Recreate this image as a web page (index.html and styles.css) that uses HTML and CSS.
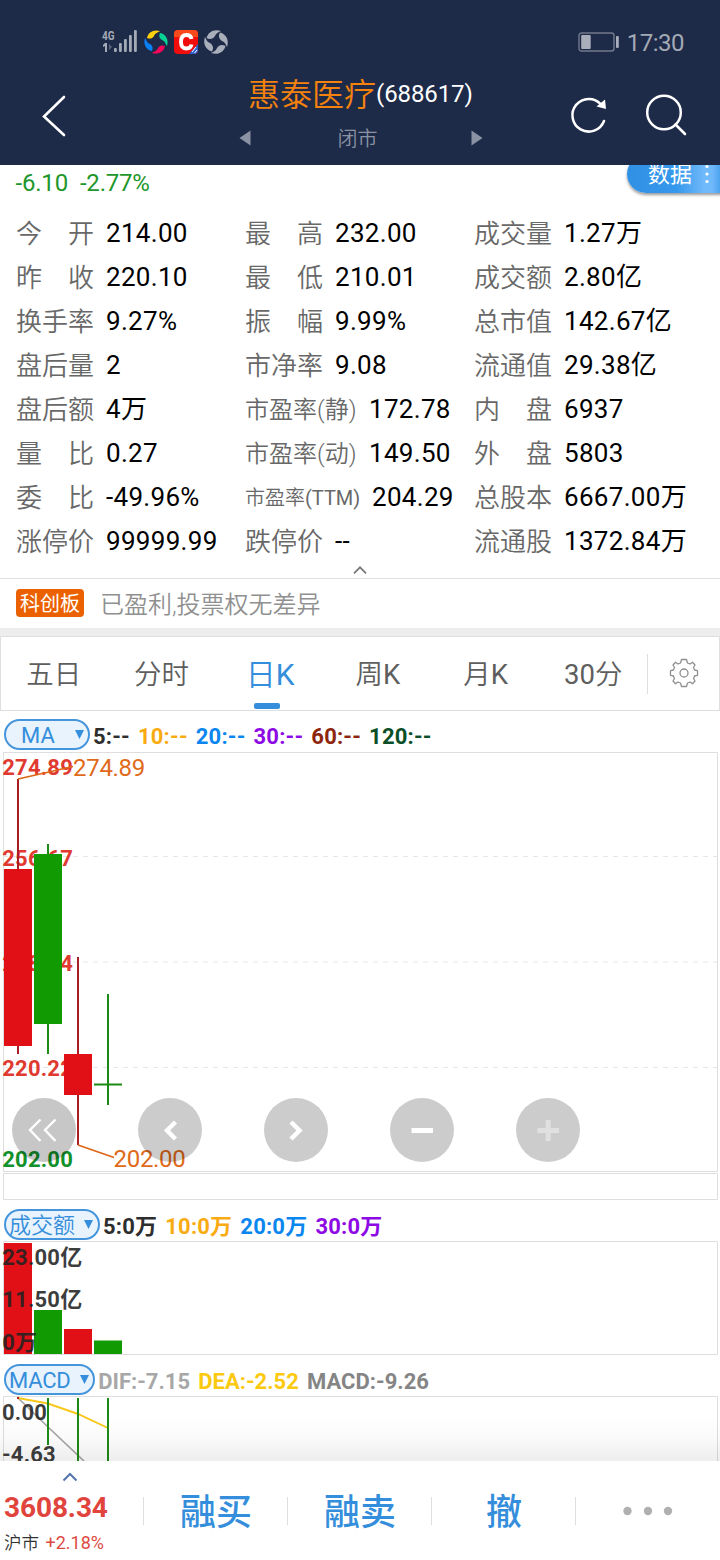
FILE: index.html
```html
<!DOCTYPE html>
<html lang="zh-CN">
<head>
<meta charset="utf-8">
<title>惠泰医疗(688617)</title>
<link rel="stylesheet" href="styles.css">
</head>
<body>
<div class="app">
  <header class="header">
    <div class="status">
      <svg class="status-icons" width="130" height="28" viewBox="0 0 130 28">
        <g fill="#a4aab6">
          <text class="net" x="1" y="12" textLength="12.500" lengthAdjust="spacingAndGlyphs">4G</text>
          <path d="M4 15h2v9H4v-6l-2 1v-2z"/>
          <path d="M8 16l3 3-3 3z" opacity=".45"/>
          <rect x="13" y="20" width="2.800" height="4" rx="1"/>
          <rect x="18" y="15" width="2.800" height="9" rx="1"/>
          <rect x="23" y="11" width="2.800" height="13" rx="1"/>
          <rect x="28" y="7" width="2.800" height="17" rx="1"/>
          <rect x="33" y="2" width="2.800" height="22" rx="1"/>
        </g>
        <g transform="translate(55 14)">
          <path d="M-9-4C-8-10-2-13 4-11C1-9-1-9-2-6C-4-3-6-3-9-4z" fill="#fbd00c"/>
          <path d="M-9-4C-8-10-2-13 4-11C1-9-1-9-2-6C-4-3-6-3-9-4z" fill="#07d293" transform="rotate(90)"/>
          <path d="M-9-4C-8-10-2-13 4-11C1-9-1-9-2-6C-4-3-6-3-9-4z" fill="#f6065b" transform="rotate(180)"/>
          <path d="M-9-4C-8-10-2-13 4-11C1-9-1-9-2-6C-4-3-6-3-9-4z" fill="#0b7ff5" transform="rotate(270)"/>
        </g>
        <rect x="73" y="2" width="24" height="24" rx="4" fill="#f20d0d"/>
        <path d="M73 9V6a4 4 0 0 1 4-4h16a4 4 0 0 1 4 4v3z" fill="#fa4a1c"/>
        <path d="M97 16v6a4 4 0 0 1-4 4h-5z" fill="#2e62cf"/>
        <path d="M91 24l4-5M93.500 25l2.500-3" stroke="#fff" stroke-width="1"/>
        <path d="M90.500 11C90 7.500 87.500 7 85.500 7C82 7 80 9 80 13.700S82 20.500 85.500 20.500C88 20.500 90 19.500 90.500 16.500" fill="none" stroke="#fff" stroke-width="3.800"/>
        <g transform="translate(115 14)" fill="#a9aebb">
          <path id="grey" d="M-9.500-4C-8-10-2-13.500 5-11C2-9.500 0-9-1-6C-3-3-6-2-9.500-4z"/>
          <use href="#grey" transform="rotate(90)"/><use href="#grey" transform="rotate(180)"/><use href="#grey" transform="rotate(270)"/>
        </g>
      </svg>
      <div class="clock">
        <svg width="42" height="20" viewBox="0 0 42 20"><rect x="1" y="1" width="35" height="18" rx="2.500" fill="none" stroke="#717a8b" stroke-width="1.400"/><rect x="3.200" y="3" width="9.500" height="14" rx="1" fill="#a9aebb"/><rect x="38" y="4" width="2.800" height="12" rx="1" fill="#a9aebb"/></svg>
        <span>17:30</span>
      </div>
    </div>
    <div class="nav">
      <svg width="26" height="44" viewBox="0 0 26 44"><path d="M22 3L2 22.500L22 41" fill="none" stroke="#fff" stroke-width="2.600" stroke-linecap="round"/></svg>
      <div class="heading">
        <div class="name">惠泰医疗<span class="code">(688617)</span></div>
        <div class="session">
          <svg width="12" height="16" viewBox="0 0 12 16"><path d="M11.500 .5v15L.5 8z" fill="#8a92a3"/></svg>
          <span>闭市</span>
          <svg width="12" height="16" viewBox="0 0 12 16"><path d="M.5 .5v15L11.500 8z" fill="#8a92a3"/></svg>
        </div>
      </div>
      <div class="actions">
        <svg width="40" height="44" viewBox="0 0 40 44"><path d="M31 12.500A16.300 16.300 0 1 0 34 29" fill="none" stroke="#fff" stroke-width="2.500" stroke-linecap="round"/><path d="M35 7.500L36 17L26.500 14.500z" fill="#fff"/></svg>
        <svg width="44" height="44" viewBox="0 0 44 44"><circle cx="20" cy="20.500" r="16.800" fill="none" stroke="#fff" stroke-width="2.500"/><path d="M31.500 32.500L41 42" stroke="#fff" stroke-width="2.600" stroke-linecap="round"/></svg>
      </div>
    </div>
  </header>

  <section class="quote">
    <div class="change"><span>-6.10</span><span>-2.77%</span></div>
    <div class="data-tag">数据<svg width="4" height="20" viewBox="0 0 4 20" fill="#fff"><circle cx="2" cy="2.500" r="1.600"/><circle cx="2" cy="10" r="1.600"/><circle cx="2" cy="17.500" r="1.600"/></svg></div>
    <div class="stats">
      <div class="stat"><span class="label"><i>今</i><i>开</i></span><b>214.00</b></div>
      <div class="stat"><span class="label"><i>最</i><i>高</i></span><b>232.00</b></div>
      <div class="stat"><span class="label">成交量</span><b>1.27万</b></div>
      <div class="stat"><span class="label"><i>昨</i><i>收</i></span><b>220.10</b></div>
      <div class="stat"><span class="label"><i>最</i><i>低</i></span><b>210.01</b></div>
      <div class="stat"><span class="label">成交额</span><b>2.80亿</b></div>
      <div class="stat"><span class="label">换手率</span><b>9.27%</b></div>
      <div class="stat"><span class="label"><i>振</i><i>幅</i></span><b>9.99%</b></div>
      <div class="stat"><span class="label">总市值</span><b>142.67亿</b></div>
      <div class="stat"><span class="label">盘后量</span><b>2</b></div>
      <div class="stat"><span class="label">市净率</span><b>9.08</b></div>
      <div class="stat"><span class="label">流通值</span><b>29.38亿</b></div>
      <div class="stat"><span class="label">盘后额</span><b>4万</b></div>
      <div class="stat"><span class="label mid">市盈率(静)</span><b>172.78</b></div>
      <div class="stat"><span class="label"><i>内</i><i>盘</i></span><b>6937</b></div>
      <div class="stat"><span class="label"><i>量</i><i>比</i></span><b>0.27</b></div>
      <div class="stat"><span class="label mid">市盈率(动)</span><b>149.50</b></div>
      <div class="stat"><span class="label"><i>外</i><i>盘</i></span><b>5803</b></div>
      <div class="stat"><span class="label"><i>委</i><i>比</i></span><b>-49.96%</b></div>
      <div class="stat"><span class="label small">市盈率<span class="latin">(TTM)</span></span><b>204.29</b></div>
      <div class="stat"><span class="label">总股本</span><b>6667.00万</b></div>
      <div class="stat"><span class="label">涨停价</span><b>99999.99</b></div>
      <div class="stat"><span class="label">跌停价</span><b>--</b></div>
      <div class="stat"><span class="label">流通股</span><b>1372.84万</b></div>
    </div>
    <div class="collapse"><svg width="14" height="10" viewBox="0 0 14 10"><path d="M1 8.300L7 2.300L13 8.300" fill="none" stroke="#777" stroke-width="1.700"/></svg></div>
  </section>

  <section class="board"><span class="badge">科创板</span><span>已盈利,投票权无差异</span></section>

  <nav class="tabs">
    <span class="tab">五日</span><span class="tab">分时</span><span class="tab active">日<span class="latin">K</span></span><span class="tab">周<span class="latin">K</span></span><span class="tab">月<span class="latin">K</span></span><span class="tab"><span class="latin">30</span>分</span>
    <span class="settings"><svg width="30" height="30" viewBox="-15 -15 30 30" fill="none" stroke="#909090" stroke-width="1.300" stroke-linejoin="round"><path d="M-2.500-13.500H2.500L3.500-10Q5-9.500 6-9L8.500-10.800L11-8L9.500-5.500Q10.200-4.500 10.500-3L13.500-2.300V2.300L10.500 3Q10.200 4.500 9.500 5.500L11 8L8.500 10.800L6 9Q5 9.500 3.500 10L2.500 13.500H-2.500L-3.500 10Q-5 9.500-6 9L-8.500 10.800L-11 8L-9.500 5.500Q-10.200 4.500-10.500 3L-13.500 2.300V-2.300L-10.500-3Q-10.200-4.500-9.500-5.500L-11-8L-8.500-10.800L-6-9Q-5-9.500-3.500-10Z"/><circle r="4"/></svg></span>
  </nav>

  <div class="legend ma">
    <span class="pill"><span class="latin">MA</span><svg width="9" height="9" viewBox="0 0 8 9" preserveAspectRatio="none"><path d="M0 0h8L4 9z" fill="#348edb"/></svg></span>
    <span class="c-dark">5:--</span><span class="c-amber">10:--</span><span class="c-blue">20:--</span><span class="c-violet">30:--</span><span class="c-brown">60:--</span><span class="c-green">120:--</span>
  </div>

  <div class="price">
    <svg width="720" height="448" viewBox="0 752 720 448">
      <path d="M3.500 752.500H717.500V1171.500H3.500ZM3.500 1173.500H717.500V1199.500H3.500Z" class="frame"/>
      <path d="M3 856.500H717M3 962H717M3 1067.500H717" class="grid"/>
      <g class="axis up">
        <text x="2.300" y="775">274.89</text><text x="2.300" y="866">256.67</text><text x="2.300" y="971">238.44</text><text x="2.300" y="1076">220.22</text>
      </g>
      <text class="axis down" x="2.300" y="1167">202.00</text>
      <path d="M18 779V1054M78 957V1145" stroke="#ab1d25" stroke-width="2"/>
      <path d="M48 844V1054M108 994V1105M94 1084.500H122" stroke="#1d8a16" stroke-width="2"/>
      <path d="M4 869h28v177H4zM64 1054h28v41H64z" fill="#e11017"/>
      <path d="M34 854h28v170H34z" fill="#129a02"/>
      <path d="M18 779L73 766.500M78 1145L114 1157.500" stroke="#dc6616" stroke-width="1.700"/>
      <text class="mark" x="73" y="776">274.89</text><text class="mark" x="113.500" y="1167">202.00</text>
    </svg>
    <div class="controls">
      <span class="control first"><svg width="64" height="64" viewBox="0 0 64 64"><path d="M28.500 21.500L18 32L28.500 43M43.500 21.500L33 32L43.500 43"/></svg></span>
      <span class="control"><svg width="64" height="64" viewBox="0 0 64 64"><path class="thick" d="M37.500 24L29 32.500L37.500 41"/></svg></span>
      <span class="control"><svg width="64" height="64" viewBox="0 0 64 64"><path class="thick" d="M27 24L35.500 32.500L27 41"/></svg></span>
      <span class="control"><svg width="64" height="64" viewBox="0 0 64 64"><path class="bar" d="M21.500 32.500H43"/></svg></span>
      <span class="control off"><svg width="64" height="64" viewBox="0 0 64 64"><path class="bar" d="M21.500 32.500H43M32.200 22V43"/></svg></span>
    </div>
  </div>

  <div class="legend vol">
    <span class="pill">成交额<svg width="9" height="9" viewBox="0 0 8 9" preserveAspectRatio="none"><path d="M0 0h8L4 9z" fill="#348edb"/></svg></span>
    <span class="c-dark">5:0万</span><span class="c-amber">10:0万</span><span class="c-blue">20:0万</span><span class="c-violet">30:0万</span>
  </div>
  <svg class="plot" width="720" height="114" viewBox="0 1241 720 114">
    <path d="M3.500 1241.500H717.500V1354.500H3.500Z" class="frame"/>
    <path d="M4 1243h28v111H4zM64 1329h28v25H64z" fill="#e11017"/>
    <path d="M34 1310h28v44H34zM94 1340.500h28v13.500H94z" fill="#129a02"/>
    <g class="axis ink"><text x="2.300" y="1265">23.00亿</text><text x="2.300" y="1307">11.50亿</text><text x="2.300" y="1350">0万</text></g>
  </svg>

  <div class="legend macd">
    <span class="pill"><span class="latin">MACD</span><svg width="9" height="9" viewBox="0 0 8 9" preserveAspectRatio="none"><path d="M0 0h8L4 9z" fill="#348edb"/></svg></span>
    <span class="c-silver">DIF:-7.15</span><span class="c-yellow">DEA:-2.52</span><span class="c-grey">MACD:-9.26</span>
  </div>
  <div class="macd-plot">
    <svg class="plot" width="720" height="65" viewBox="0 1396 720 65">
      <path d="M3.500 1470V1396.500H717.500V1470" class="frame"/>
      <path d="M18 1398L48 1427L84 1461" fill="none" stroke="#a5a5a5" stroke-width="1.700"/>
      <path d="M18 1398L48 1403.500L78 1414L108 1428" fill="none" stroke="#f8c81c" stroke-width="1.900"/>
      <path d="M48 1398V1445M78 1398V1461M108 1398V1461" stroke="#1d8a16" stroke-width="2"/>
      <rect x="17" y="1397" width="2" height="2" fill="#ab1d25"/>
      <g class="axis ink"><text x="2" y="1420">0.00</text><text x="2" y="1462">-4.63</text></g>
    </svg>
  </div>

  <footer class="footer">
    <div class="index">
      <svg width="16" height="10" viewBox="0 0 16 10"><path d="M1.500 8.500L8 2L14.500 8.500" fill="none" stroke="#5474ac" stroke-width="2"/></svg>
      <strong>3608.34</strong>
      <div class="market">沪市<em>+2.18%</em></div>
    </div>
    <div class="trade">融买</div>
    <div class="trade">融卖</div>
    <div class="trade">撤</div>
    <div class="trade more"><svg width="50" height="10" viewBox="0 0 50 10" fill="#b0b0b0"><circle cx="4.500" cy="5" r="4.200"/><circle cx="25" cy="5" r="4.200"/><circle cx="45" cy="5" r="4.200"/></svg></div>
  </footer>
</div>
</body>
</html>
```

FILE: styles.css
```css
* { box-sizing: border-box; margin: 0; padding: 0; }
body { width: 720px; height: 1560px; overflow: hidden; background: #fff; font-family: Roboto, "Noto Sans CJK SC", sans-serif; }
svg { display: block; flex: none; }
i, em { font-style: normal; }
span { white-space: nowrap; }
.latin { font-weight: 400; }
.app { width: 720px; height: 1560px; display: flex; flex-direction: column; }

.header { position: relative; z-index: 2; flex: none; height: 165px; background: #1e2b48; color: #fff; }
.status { height: 72px; padding: 28px 36px 0 101px; display: flex; justify-content: space-between; align-items: flex-start; }
.net { font: 700 13px Roboto, sans-serif; }
.clock { display: flex; align-items: center; gap: 7px; color: #a3a9b5; font-size: 24px; line-height: 30px; letter-spacing: -.5px; }
.clock svg { margin-top: -2px; }
.nav { height: 93px; padding: 0 32px 0 42px; display: grid; grid-template-columns: 26px 1fr 118px; align-items: start; }
.nav > svg { margin-top: 22px; }
.heading { padding-left: 171px; }
.name { width: 240px; margin-left: 9px; font-size: 32px; line-height: 46px; color: #f6820e; white-space: nowrap; font-weight: 350; }
.code { color: #fff; font-size: 24px; position: relative; top: -4px; font-weight: 400; letter-spacing: -.1px; }
.session { width: 244px; height: 44px; margin: -5px 0 0 -.5px; display: flex; align-items: center; justify-content: space-between; color: #8a92a3; font-size: 20px; font-weight: 350; }
.session span { margin: -2px 6px 0 0; }
.actions { display: flex; justify-content: space-between; padding-top: 20px; }

.quote { position: relative; flex: none; height: 414px; border-bottom: 1px solid #dfdfdf; }
.change { height: 47px; padding: 4px 0 0 15.500px; display: flex; gap: 12px; color: #1e962b; font-size: 24px; line-height: 28px; letter-spacing: -.2px; }
.data-tag { position: absolute; right: -6px; top: -10px; width: 99px; height: 38px; padding: 2px 0 0 21px; border-radius: 19px 0 0 19px; background: linear-gradient(90deg, #3090e4, #3698ec 50%, #70b9fb 78%, #70b9fb 86%, #3194e7); color: #fff; font-size: 22px; line-height: 36px; display: flex; align-items: center; gap: 12.500px; box-shadow: 0 2px 3px rgba(0, 0, 0, .4); }
.data-tag svg { margin-top: -2px; }
.stats { padding-left: 16px; display: grid; grid-template-columns: 229px 229px 246px; grid-auto-rows: 44px; }
.stat { height: 44px; display: flex; align-items: flex-start; line-height: 44px; }
.stat b { margin: -1px 0 0 12px; font-size: 26px; font-weight: 400; letter-spacing: .3px; color: #000; white-space: nowrap; }
.label { width: 78px; display: flex; justify-content: space-between; font-size: 26px; font-weight: 350; color: #686868; }
.label.mid { width: 112px; font-size: 24px; }
.label.small { width: 115px; font-size: 20px; }
.collapse { height: 14px; display: flex; justify-content: center; padding-top: 1px; }

.board { flex: none; height: 57px; border-bottom: 8px solid #ededed; padding: 0 16px 2px; display: flex; align-items: center; gap: 16px; color: #909090; font-size: 24px; font-weight: 350; }
.badge { width: 68px; height: 28px; margin-top: 1px; border-radius: 4px; background: #eb6100; color: #fff; font-size: 20px; line-height: 30px; font-weight: 400; text-align: center; }

.tabs { flex: none; height: 75px; border: 1px solid #dedede; display: flex; align-items: center; }
.tab { position: relative; flex: none; width: 107.700px; height: 73px; line-height: 76px; text-align: center; font-size: 27.500px; font-weight: 350; color: #5e5e5e; text-indent: -2px; }
.tab:nth-child(n+4) { text-indent: 0; }
.tab.active { font-size: 30px; color: #348edb; text-indent: 0; }
.tab.active::after { content: ""; position: absolute; left: 37.600px; bottom: 1px; width: 26px; height: 6px; border-radius: 2px; background: #348edb; }
.settings { flex: 1; height: 40px; border-left: 1px solid #dedede; display: flex; align-items: center; justify-content: center; }
.settings svg { margin: -2px 0 0 1px; }

.legend { flex: none; display: flex; align-items: flex-start; gap: 8px; padding-left: 4px; font-size: 22px; font-weight: 700; line-height: 30px; white-space: nowrap; letter-spacing: .2px; }
.legend > span { margin-top: 3px; }
.legend > .pill { height: 31px; margin: 0 -5px 0 0; padding-top: 2px; border: 2px solid #4595dc; border-radius: 16px; background: #e8f3fd; color: #348edb; font-weight: 350; letter-spacing: 0; display: flex; align-items: center; }
.pill svg { margin-top: -3px; }
.legend.ma { height: 41px; padding-top: 8px; }
.ma .pill { width: 86px; padding-left: 15px; gap: 20px; }
.legend.vol { height: 41px; padding-top: 9px; }
.vol .pill { width: 96px; padding-left: 3px; gap: 9px; }
.legend.macd { height: 41px; padding-top: 9px; letter-spacing: 0; gap: 8.200px; }
.macd .pill { width: 91px; padding-left: 3px; gap: 9px; }
.macd .pill .latin { letter-spacing: -.2px; }
.c-dark { color: #2e2e2e; } .c-amber { color: #f9ab12; } .c-blue { color: #0b86ef; } .c-violet { color: #8d0ae5; } .c-brown { color: #8c250c; } .c-green { color: #0a4f28; }
.c-silver { color: #a7a7a7; } .c-yellow { color: #fbc90f; } .c-grey { color: #858585; }

.price { position: relative; flex: none; height: 448px; }
.frame { fill: none; stroke: #dedede; stroke-width: 1; }
.grid { stroke: #e6e6e6; stroke-width: 1; stroke-dasharray: 5 5; }
.axis { font-size: 22px; font-weight: 700; letter-spacing: .2px; }
.up { fill: #e03a30; }
.down { fill: #13912b; }
.ink { fill: #222; fill-opacity: .88; }
.mark { font-size: 24px; letter-spacing: -.3px; fill: #e06a1a; }
.controls { position: absolute; left: 12.400px; top: 346px; display: flex; gap: 62px; }
.control { width: 64px; height: 64px; border-radius: 50%; background: rgba(0, 0, 0, .2); }
.control.first { background: rgba(0, 0, 0, .22); }
.control path { fill: none; stroke: #fff; stroke-width: 2.4; }
.control .thick { stroke-width: 4.5; }
.control .bar { stroke-width: 5; }
.control.off path { stroke: #e0e0e0; }
.plot { overflow: hidden; }
.macd-plot { position: relative; flex: none; height: 65px; }
.macd-plot::after { content: ""; position: absolute; inset: 19px 0 0; background: linear-gradient(rgba(0, 0, 0, 0), rgba(0, 0, 0, .02) 50%, rgba(0, 0, 0, .07)); }

.footer { flex: none; height: 99px; display: grid; grid-template-columns: repeat(5, 144px); background: #fff; }
.index { padding-left: 4px; }
.index svg { margin: 11px 0 0 58.400px; }
.index strong { display: block; margin-top: 9px; font-size: 28px; line-height: 34px; letter-spacing: -.1px; color: #e0443c; }
.market { margin-top: 3px; font-size: 17.500px; line-height: 29px; font-weight: 350; color: #333; }
.market em { margin-left: 6.500px; font-size: 18px; font-weight: 400; color: #dd4a42; }
.trade { height: 28px; margin-top: 36px; border-left: 1px solid #dedede; margin-left: -1px; display: flex; align-items: center; justify-content: center; font-size: 36px; line-height: 28px; padding-top: 4px; font-weight: 500; color: #348edb; white-space: nowrap; }
.trade.more { padding: 0 0 1px; }
```
